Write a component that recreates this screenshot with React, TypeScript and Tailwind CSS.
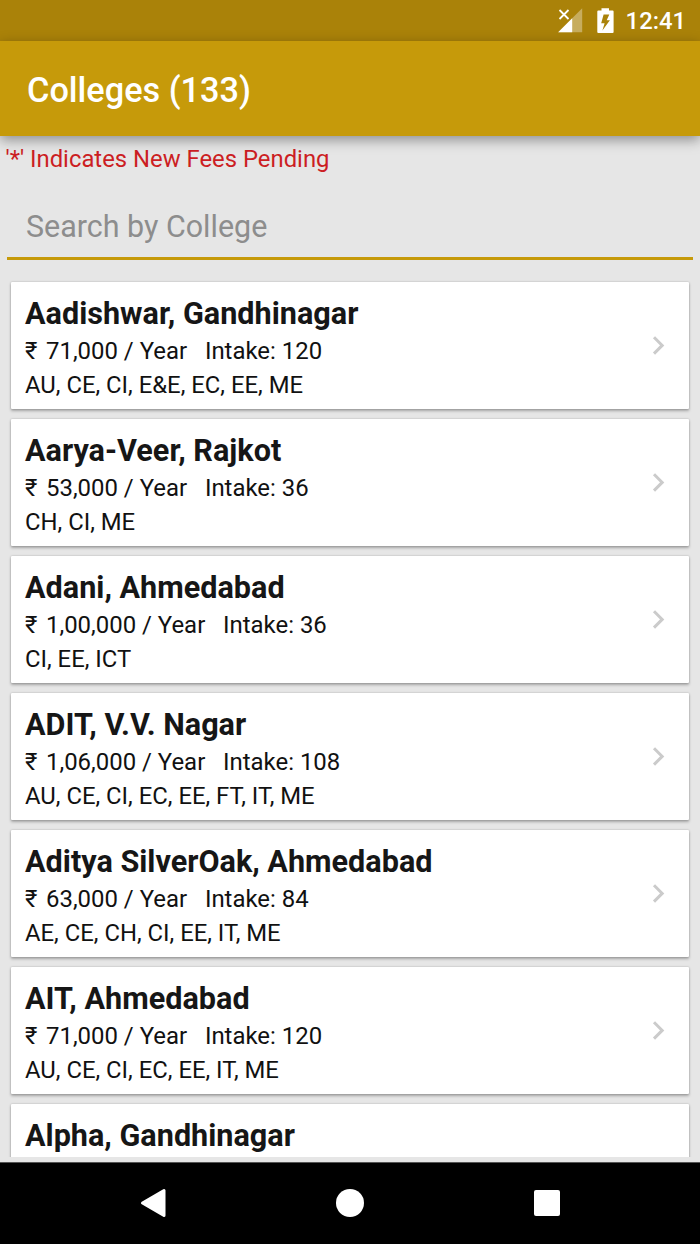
type College = { name: string; fee?: string; intake?: string; branches?: string };

const colleges: College[] = [
  { name: "Aadishwar, Gandhinagar", fee: "71,000", intake: "120", branches: "AU, CE, CI, E&E, EC, EE, ME" },
  { name: "Aarya-Veer, Rajkot", fee: "53,000", intake: "36", branches: "CH, CI, ME" },
  { name: "Adani, Ahmedabad", fee: "1,00,000", intake: "36", branches: "CI, EE, ICT" },
  { name: "ADIT, V.V. Nagar", fee: "1,06,000", intake: "108", branches: "AU, CE, CI, EC, EE, FT, IT, ME" },
  { name: "Aditya SilverOak, Ahmedabad", fee: "63,000", intake: "84", branches: "AE, CE, CH, CI, EE, IT, ME" },
  { name: "AIT, Ahmedabad", fee: "71,000", intake: "120", branches: "AU, CE, CI, EC, EE, IT, ME" },
  { name: "Alpha, Gandhinagar" },
];

function StatusBar() {
  return (
    <div className="flex h-[41px] shrink-0 items-center justify-end bg-[#aa8209] pr-[14px] text-white">
      <svg className="mr-[14px] h-[26px] w-[25px]" viewBox="0 0 25 26">
        <path d="M24.2 .3V24.300H.2z" fill="#fff" fillOpacity=".35" />
        <path d="M14.200 10.300V24.300H.2z" fill="#fff" />
        <path d="M1.500 2l9 9M10.500 2L1.500 11" stroke="#fff" strokeWidth="1.800" />
      </svg>
      <svg className="mr-[12px] h-[26px] w-[17px]" viewBox="0 0 17 26">
        <path
          fill="#fff"
          fillRule="evenodd"
          d="M4.500 .3h7.500v2.200h3.600a1 1 0 0 1 1 1v20.600a1 1 0 0 1-1 1H1.300a1 1 0 0 1-1-1V3.500a1 1 0 0 1 1-1H4.500zM6.600 6.500L4.200 15.200H7.600L5.400 22.500L12.900 12.200H9.700L12.300 6.500z"
        />
      </svg>
      <span className="pt-[2px] text-[23.8px] leading-[39px] font-medium">12:41</span>
    </div>
  );
}

function Card({ college }: { college: College }) {
  return (
    <li className="flex h-[127px] shrink-0 items-start justify-between rounded-[1px] bg-white pt-[14px] pr-[23px] pl-[14px] shadow-[0_2px_3px_rgba(0,0,0,0.28),0_0_2px_rgba(0,0,0,0.25)]">
      <div className="flex flex-col whitespace-pre text-[#111]">
        <h2 className="text-[30.600px] leading-[36px] font-bold text-[#161616]">{college.name}</h2>
        {college.fee && (
          <p className="text-[23.930px] leading-[38px]">
            <span className="inline-block w-[21px]">₹</span>
            {college.fee} / Year{"   "}Intake: {college.intake}
          </p>
        )}
        {college.branches && <p className="text-[23.850px] leading-[30px]">{college.branches}</p>}
      </div>
      <svg className="mt-[39px] h-[20px] w-[14px]" viewBox="0 0 14 20">
        <path d="M2 2.200L10.200 10.400L2 18.600" fill="none" stroke="#cbcbcb" strokeWidth="3" />
      </svg>
    </li>
  );
}

function NavBar() {
  return (
    <nav className="flex h-[82px] shrink-0 items-center justify-between border-t border-[#555] bg-black pr-[140px] pb-[2px] pl-[140px]">
      <svg className="h-[30px] w-[27px]" viewBox="0 0 27 30">
        <path d="M2.500 15L24 2.500V27.500z" fill="#fff" stroke="#fff" strokeWidth="3" strokeLinejoin="round" />
      </svg>
      <div className="mr-[2px] size-[28px] rounded-full bg-white" />
      <div className="size-[26px] rounded-[2px] bg-white" />
    </nav>
  );
}

export default function App() {
  return (
    <div className="flex h-[1244px] w-[700px] flex-col overflow-hidden bg-[#e6e6e6] font-['Roboto','Noto_Sans',sans-serif]">
      <StatusBar />
      <header className="z-10 flex h-[95px] shrink-0 items-center bg-[#c69a0a] pt-[3px] pl-[27px] shadow-[0_4px_12px_rgba(0,0,0,0.38)]">
        <h1 className="text-[34.300px] leading-[40px] font-medium text-white">Colleges (133)</h1>
      </header>
      <p className="h-[46px] shrink-0 pl-[5.500px] text-[23.850px] leading-[46px] text-[#cc1e23]">
        '*' Indicates New Fees Pending
      </p>
      <div className="mx-[7px] flex h-[78px] shrink-0 items-center border-b-[3px] border-[#c69a0a] pt-[14px] pl-[19px]">
        <span className="text-[30.450px] leading-[40px] text-[#8d8d8d]">Search by College</span>
      </div>
      <ul className="flex min-h-0 flex-1 flex-col gap-[10px] overflow-hidden px-[11px] pt-[22px]">
        {colleges.map((college) => (
          <Card key={college.name} college={college} />
        ))}
      </ul>
      <div className="h-[5px] shrink-0 bg-[#e6e6e6]" />
      <NavBar />
    </div>
  );
}
